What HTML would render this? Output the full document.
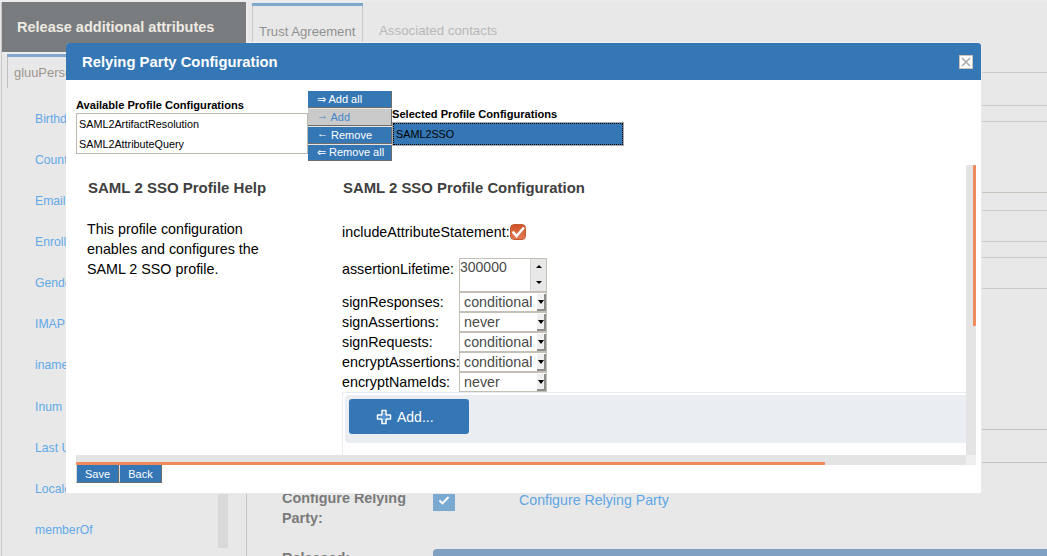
<!DOCTYPE html>
<html><head><meta charset="utf-8">
<style>
*{box-sizing:border-box}
html,body{margin:0;padding:0;width:1047px;height:556px;overflow:hidden;background:#e8e8e8;font-family:"Liberation Sans",sans-serif;position:relative}
.a{position:absolute;white-space:nowrap}
.lnk{color:#62a8e8;font-size:12.2px;left:35px}
.btnb{background:#3577b5;color:#fff;font-size:11px;border-right:1px solid #6d6d6d;border-bottom:1px solid #6d6d6d}
.sel{background:#fff;border:1px solid #c4c0b8;font-size:14.3px;color:#4a4a4a;height:20px;width:88px;left:459px}
.sel span{position:absolute;left:4px;top:1px}
.sel i{position:absolute;left:77px;top:1px;width:9px;height:17px;background:#efefef;border-right:2px solid #8e8e8e;border-bottom:2px solid #8e8e8e}
.sel i:after{content:"";position:absolute;left:1px;top:6px;border-left:3px solid transparent;border-right:3px solid transparent;border-top:4px solid #000}
.lab{font-size:14.3px;color:#000;left:342px}
.hr{left:981px;width:66px;height:1px;background:#cacaca}
</style></head><body>
<!-- top line -->
<div class="a" style="left:0;top:0;width:1047px;height:2px;background:#ececec"></div>
<!-- left panel -->
<div class="a" style="left:1px;top:2px;width:1px;height:554px;background:#c8c8c8"></div>
<div class="a" style="left:2px;top:2px;width:244px;height:50px;background:#787c7f"></div>
<div class="a" style="left:17px;top:19px;font-size:14.5px;font-weight:bold;color:#eeeae2">Release additional attributes</div>
<div class="a" style="left:2px;top:52px;width:244px;height:2px;background:#eeeeee"></div>
<div class="a" style="left:7px;top:54px;width:239px;height:3px;background:#7fa8cc"></div>
<div class="a" style="left:7px;top:57px;width:1px;height:31px;background:#c0c0c0"></div>
<div class="a" style="left:14px;top:65px;font-size:12.9px;color:#9c968e">gluuPerson</div>
<div class="a lnk" style="top:112px">Birthdate</div>
<div class="a lnk" style="top:153px">Country</div>
<div class="a lnk" style="top:194px">Email</div>
<div class="a lnk" style="top:235px">Enrollment</div>
<div class="a lnk" style="top:276px">Gender</div>
<div class="a lnk" style="top:317px">IMAP</div>
<div class="a lnk" style="top:358px">iname</div>
<div class="a lnk" style="top:400px">Inum</div>
<div class="a lnk" style="top:441px">Last Updated</div>
<div class="a lnk" style="top:482px">Locale</div>
<div class="a lnk" style="top:523px">memberOf</div>
<div class="a" style="left:218px;top:150px;width:10px;height:398px;background:#d9d9d9"></div>
<div class="a" style="left:246px;top:52px;width:1px;height:504px;background:#c4c4c4"></div>
<div class="a" style="left:246px;top:0;width:2px;height:52px;background:#ececec"></div>

<!-- right panel tabs -->
<div class="a" style="left:252px;top:3px;width:111px;height:3px;background:#7fa8cc"></div>
<div class="a" style="left:252px;top:6px;width:1px;height:37px;background:#c8c8c8"></div>
<div class="a" style="left:362px;top:6px;width:1px;height:37px;background:#c8c8c8"></div>
<div class="a" style="left:259px;top:24px;font-size:13.1px;color:#909090">Trust Agreement</div>
<div class="a" style="left:379px;top:23px;font-size:13.3px;color:#b8b8b8">Associated contacts</div>
<div class="a hr" style="top:72px"></div>
<div class="a hr" style="top:105px"></div>
<div class="a hr" style="top:121px"></div>
<div class="a hr" style="top:192px;background:#c4c4bc"></div>
<div class="a hr" style="top:210px"></div>
<div class="a hr" style="top:241px"></div>
<div class="a hr" style="top:257px"></div>
<div class="a hr" style="top:288px"></div>
<div class="a hr" style="top:429px;background:#c4c4bc"></div>
<div class="a hr" style="top:462px;background:#c4c4bc"></div>

<!-- below modal -->
<div class="a" style="left:282px;top:488px;font-size:14.4px;font-weight:bold;color:#7a7a7a;line-height:20px">Configure Relying<br>Party:</div>
<div class="a" style="left:433px;top:489px;width:22px;height:22px;background:#7aaad2"></div>
<svg class="a" style="left:433px;top:489px" width="22" height="22"><path d="M6.5 11.5 L9.5 14.5 L15.5 8" fill="none" stroke="#fff" stroke-width="1.9"/></svg>
<div class="a" style="left:519px;top:492px;font-size:14.2px;color:#5ea6e6">Configure Relying Party</div>
<div class="a" style="left:282px;top:550px;font-size:14.4px;font-weight:bold;color:#7a7a7a">Released:</div>
<div class="a" style="left:433px;top:549px;width:614px;height:10px;background:#7fa0c0;border-radius:4px 0 0 0"></div>

<!-- modal -->
<div class="a" style="left:65px;top:42px;width:181px;height:1px;background:#7d7a78"></div>
<div class="a" style="left:246px;top:42px;width:733px;height:1px;background:#f4f0ec"></div>
<div class="a" style="left:979px;top:42px;width:3px;height:452px;background:#ede9e5;border-radius:0 4px 0 0"></div>
<div class="a" style="left:66px;top:493px;width:916px;height:1px;background:#eaeaea"></div>
<div class="a" style="left:66px;top:43px;width:915px;height:450px;background:#fff;border-radius:3px 3px 0 0"></div>
<div class="a" style="left:66px;top:43px;width:915px;height:37px;background:#3577b5;border-radius:3px 3px 0 0"></div>
<div class="a" style="left:82px;top:54px;font-size:14.8px;font-weight:bold;color:#fff">Relying Party Configuration</div>
<div class="a" style="left:959px;top:55px;width:14px;height:14px;background:#fff;border:1px solid #ccc4bc"></div>
<svg class="a" style="left:959px;top:55px" width="14" height="14"><path d="M3 3 L11 11 M11 3 L3 11" stroke="#ababab" stroke-width="1.6"/></svg>

<div class="a" style="left:76px;top:99px;font-size:11.1px;font-weight:bold;color:#000">Available Profile Configurations</div>
<div class="a" style="left:76px;top:113px;width:232px;height:41px;border:1px solid #bbb8b0;background:#fff"></div>
<div class="a" style="left:79px;top:118px;font-size:10.8px;color:#000">SAML2ArtifactResolution</div>
<div class="a" style="left:79px;top:138px;font-size:10.8px;color:#000">SAML2AttributeQuery</div>

<div class="a" style="left:308px;top:107px;width:84px;height:39px;background:#e8e4e0"></div>
<div class="a btnb" style="left:308px;top:91px;width:84px;height:17px;padding-left:9px;line-height:16px">&#8658; Add all</div>
<div class="a btnb" style="left:308px;top:109px;width:84px;height:17px;padding-left:9px;line-height:16px;background:#cacaca;color:#4585c8"><span style="position:relative;top:-2.5px">&#8594;</span> Add</div>
<div class="a btnb" style="left:308px;top:127px;width:84px;height:17px;padding-left:9px;line-height:16px"><span style="position:relative;top:-2px">&#8592;</span> Remove</div>
<div class="a btnb" style="left:308px;top:145px;width:84px;height:16px;padding-left:9px;line-height:15px">&#8656; Remove all</div>

<div class="a" style="left:392px;top:108px;font-size:11.1px;font-weight:bold;color:#000">Selected Profile Configurations</div>
<div class="a" style="left:392px;top:122px;width:232px;height:24px;background:#3577b5;border:1px solid #aaa"></div>
<div class="a" style="left:393px;top:123px;width:230px;height:22px;border:1px dotted #000"></div>
<div class="a" style="left:396px;top:128px;font-size:10.8px;color:#000">SAML2SSO</div>

<!-- content scroll region -->
<div class="a" style="left:88px;top:179px;font-size:15px;font-weight:bold;color:#404040">SAML 2 SSO Profile Help</div>
<div class="a" style="left:87px;top:219px;font-size:14.3px;color:#000;line-height:20px">This profile configuration<br>enables and configures the<br>SAML 2 SSO profile.</div>
<div class="a" style="left:343px;top:180px;font-size:14.88px;font-weight:bold;color:#404040">SAML 2 SSO Profile Configuration</div>

<div class="a lab" style="top:224px">includeAttributeStatement:</div>
<div class="a" style="left:510px;top:224px;width:16px;height:16px;background:linear-gradient(#d05428,#e27c52);border:1px solid #c45a32;border-radius:4px"></div>
<svg class="a" style="left:510px;top:224px" width="16" height="16"><path d="M2.6 7.6 L6.6 12 L14 3.5" fill="none" stroke="#fff" stroke-width="2.6"/></svg>
<div class="a lab" style="top:261px">assertionLifetime:</div>
<div class="a" style="left:459px;top:258px;width:88px;height:34px;border:1px solid #c4c0b8;background:#fff"></div>
<div class="a" style="left:460px;top:259px;font-size:14px;color:#4a4a4a">300000</div>
<div class="a" style="left:530px;top:259px;width:16px;height:32px;background:#e8e8e8;border-left:1px solid #d4d4d4"></div>
<div class="a" style="left:536px;top:265px;border-left:3px solid transparent;border-right:3px solid transparent;border-bottom:3px solid #000"></div>
<div class="a" style="left:536px;top:281px;border-left:3px solid transparent;border-right:3px solid transparent;border-top:3px solid #000"></div>

<div class="a lab" style="top:294px">signResponses:</div>
<div class="a lab" style="top:314px">signAssertions:</div>
<div class="a lab" style="top:334px">signRequests:</div>
<div class="a lab" style="top:354px">encryptAssertions:</div>
<div class="a lab" style="top:374px">encryptNameIds:</div>
<div class="a sel" style="top:292px"><span>conditional</span><i></i></div>
<div class="a sel" style="top:312px"><span>never</span><i></i></div>
<div class="a sel" style="top:332px"><span>conditional</span><i></i></div>
<div class="a sel" style="top:352px"><span>conditional</span><i></i></div>
<div class="a sel" style="top:372px"><span>never</span><i></i></div>

<div class="a" style="left:342px;top:392px;width:624px;height:63px;border-left:1px solid #e8ecf2;border-top:1px solid #e8ecf2"></div>
<div class="a" style="left:345px;top:395px;width:621px;height:48px;background:#eaedf2;border-radius:4px 0 0 4px"></div>
<div class="a" style="left:349px;top:399px;width:120px;height:35px;background:#3577b5;border-radius:3px"></div>
<svg class="a" style="left:376px;top:409px" width="16" height="16"><path d="M6 1.5 H10 V6 H14.5 V10 H10 V14.5 H6 V10 H1.5 V6 H6 Z" fill="#2f70b0" stroke="#fff" stroke-width="1.5" stroke-linejoin="round"/><path d="M8 3.5 V12.5 M3.5 8 H12.5" stroke="#5d9bd2" stroke-width="1.6"/></svg>
<div class="a" style="left:397px;top:409px;font-size:14px;color:#fff">Add...</div>

<!-- scrollbars -->
<div class="a" style="left:966px;top:165px;width:10px;height:290px;background:#e4e4e4"></div>
<div class="a" style="left:973px;top:165px;width:3px;height:161px;background:#ef8a5e;border-radius:1px"></div>
<div class="a" style="left:76px;top:455px;width:890px;height:10px;background:#e4e4e4"></div>
<div class="a" style="left:76px;top:462px;width:749px;height:3px;background:#ef8a5e;border-radius:1px"></div>
<div class="a" style="left:966px;top:455px;width:10px;height:10px;background:#efefef"></div>

<div class="a btnb" style="left:76px;top:465px;width:43px;height:18px;padding-top:1px;font-size:11px;text-align:center;line-height:16px;border-left:1px solid #dcdcdc">Save</div>
<div class="a btnb" style="left:119px;top:465px;width:43px;height:18px;padding-top:1px;font-size:11px;text-align:center;line-height:16px;border-left:1px solid #dcdcdc">Back</div>
</body></html>
